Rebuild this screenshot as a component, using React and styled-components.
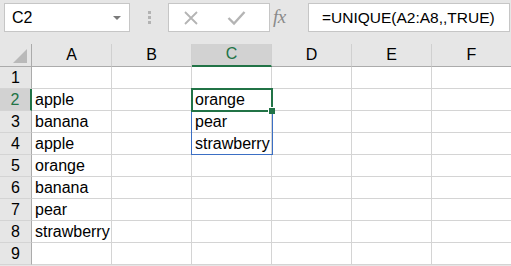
import { Fragment } from "react";
import styled, { createGlobalStyle } from "styled-components";

const GlobalStyle = createGlobalStyle`
  html, body {
    margin: 0;
    padding: 0;
    background: #e6e6e6;
    overflow: hidden;
  }
  body {
    font-family: "Liberation Sans", Arial, sans-serif;
    color: #000;
  }
`;

const ROW_HEAD = 32;
const COL_W = 80;
const HEAD_H = 23;
const ROW_H = 22;
const GREEN = "#217346";

const Toolbar = styled.div`
  display: flex;
  align-items: flex-start;
  height: 44px;
  padding: 3px 0 0 4px;
  box-sizing: border-box;
  background: #e6e6e6;
`;

const NameBox = styled.div`
  display: flex;
  align-items: center;
  justify-content: space-between;
  width: 126px;
  height: 29px;
  box-sizing: border-box;
  border: 1px solid #c6c6c6;
  background: #fff;
  padding: 0 8px 0 7px;
  font-size: 16px;
`;

const Caret = styled.span`
  width: 0;
  height: 0;
  border-left: 4px solid transparent;
  border-right: 4px solid transparent;
  border-top: 4px solid #7a7a7a;
`;

const Dots = styled.div`
  display: flex;
  flex-direction: column;
  gap: 2px;
  margin: 8px 17px 0 18px;

  span {
    width: 3px;
    height: 3px;
    background: #b3b3b3;
  }
`;

const ButtonBox = styled.div`
  display: flex;
  align-items: center;
  gap: 28px;
  width: 102px;
  height: 29px;
  box-sizing: border-box;
  border: 1px solid #c6c6c6;
  background: #fff;
  padding-left: 14px;
`;

const FxLabel = styled.div`
  width: 38px;
  height: 29px;
  display: flex;
  align-items: center;
  padding: 0 0 2px 3px;
  box-sizing: border-box;
  font-family: "Liberation Serif", "Times New Roman", serif;
  font-style: italic;
  font-size: 19px;
  color: #8a8a8a;
  letter-spacing: -0.5px;
`;

const FormulaBox = styled.div`
  flex: 1;
  height: 29px;
  display: flex;
  align-items: center;
  box-sizing: border-box;
  border: 1px solid #c6c6c6;
  background: #fff;
  padding-left: 13px;
  margin-right: 1px;
  font-size: 15.5px;
`;

const Sheet = styled.div`
  position: relative;
  display: grid;
  grid-template-columns: ${ROW_HEAD}px repeat(6, ${COL_W}px);
  grid-template-rows: ${HEAD_H}px repeat(9, ${ROW_H}px);
  background: #fff;
  font-size: 16px;
`;

const Corner = styled.div`
  position: relative;
  background: #e6e6e6;
  border-right: 1px solid #ababab;
  border-bottom: 1px solid #ababab;

  &::after {
    content: "";
    position: absolute;
    right: 4px;
    bottom: 3px;
    width: 0;
    height: 0;
    border-left: 14px solid transparent;
    border-bottom: 14px solid #b9b9b9;
  }
`;

const ColHeader = styled.div`
  display: flex;
  align-items: flex-end;
  justify-content: center;
  padding-bottom: 2px;
  box-sizing: border-box;
  background: ${(p) => (p.$selected ? "#d2d2d2" : "#e6e6e6")};
  color: ${(p) => (p.$selected ? GREEN : "#000")};
  border-right: 1px solid #d0d0d0;
  border-bottom: ${(p) => (p.$selected ? `2px solid ${GREEN}` : "1px solid #ababab")};
  line-height: 18px;
`;

const RowHeader = styled.div`
  display: flex;
  align-items: flex-end;
  justify-content: center;
  padding-bottom: 1px;
  box-sizing: border-box;
  background: ${(p) => (p.$selected ? "#d2d2d2" : "#e6e6e6")};
  color: ${(p) => (p.$selected ? GREEN : "#000")};
  border-right: ${(p) => (p.$selected ? `2px solid ${GREEN}` : "1px solid #ababab")};
  border-bottom: 1px solid #d4d4d4;
  line-height: 18px;
`;

const Cell = styled.div`
  display: flex;
  align-items: flex-end;
  padding: 0 0 1px 3px;
  box-sizing: border-box;
  border-right: 1px solid #d4d4d4;
  border-bottom: 1px solid #d4d4d4;
  white-space: nowrap;
  line-height: 18px;
  min-width: 0;
`;

const SpillFrame = styled.div`
  position: absolute;
  left: ${ROW_HEAD + COL_W * 2 - 1}px;
  top: ${HEAD_H + ROW_H - 1}px;
  width: ${COL_W + 2}px;
  height: ${ROW_H * 3 + 1}px;
  box-sizing: border-box;
  border: 1px solid #3b6fc4;
  pointer-events: none;
`;

const ActiveFrame = styled.div`
  position: absolute;
  left: ${ROW_HEAD + COL_W * 2 - 1}px;
  top: ${HEAD_H + ROW_H - 1}px;
  width: ${COL_W + 2}px;
  height: ${ROW_H + 2}px;
  box-sizing: border-box;
  border: 2px solid ${GREEN};
  pointer-events: none;
`;

const FillHandle = styled.div`
  position: absolute;
  right: -4px;
  bottom: -4px;
  width: 6px;
  height: 6px;
  background: ${GREEN};
  border-left: 1px solid #fff;
  border-top: 1px solid #fff;
`;

const columns = ["A", "B", "C", "D", "E", "F"];
const colA = ["", "apple", "banana", "apple", "orange", "banana", "pear", "strawberry", ""];
const colC = ["", "orange", "pear", "strawberry", "", "", "", "", ""];

function CancelIcon() {
  return (
    <svg width="16" height="16" viewBox="0 0 16 16">
      <path d="M2 2 L14 14 M14 2 L2 14" stroke="#b4b4b4" strokeWidth="1.8" fill="none" />
    </svg>
  );
}

function CheckIcon() {
  return (
    <svg width="19" height="16" viewBox="0 0 19 16">
      <path d="M1.5 8 L7 13.5 L17.5 2" stroke="#b4b4b4" strokeWidth="2.4" fill="none" />
    </svg>
  );
}

export default function App() {
  return (
    <>
      <GlobalStyle />
      <Toolbar>
        <NameBox>
          C2
          <Caret />
        </NameBox>
        <Dots>
          <span />
          <span />
          <span />
        </Dots>
        <ButtonBox>
          <CancelIcon />
          <CheckIcon />
        </ButtonBox>
        <FxLabel>fx</FxLabel>
        <FormulaBox>=UNIQUE(A2:A8,,TRUE)</FormulaBox>
      </Toolbar>
      <Sheet>
        <Corner />
        {columns.map((c) => (
          <ColHeader key={c} $selected={c === "C"}>
            {c}
          </ColHeader>
        ))}
        {colA.map((a, i) => (
          <Fragment key={i}>
            <RowHeader $selected={i === 1}>{i + 1}</RowHeader>
            <Cell>{a}</Cell>
            <Cell />
            <Cell>{colC[i]}</Cell>
            <Cell />
            <Cell />
            <Cell />
          </Fragment>
        ))}
        <SpillFrame />
        <ActiveFrame>
          <FillHandle />
        </ActiveFrame>
      </Sheet>
    </>
  );
}
